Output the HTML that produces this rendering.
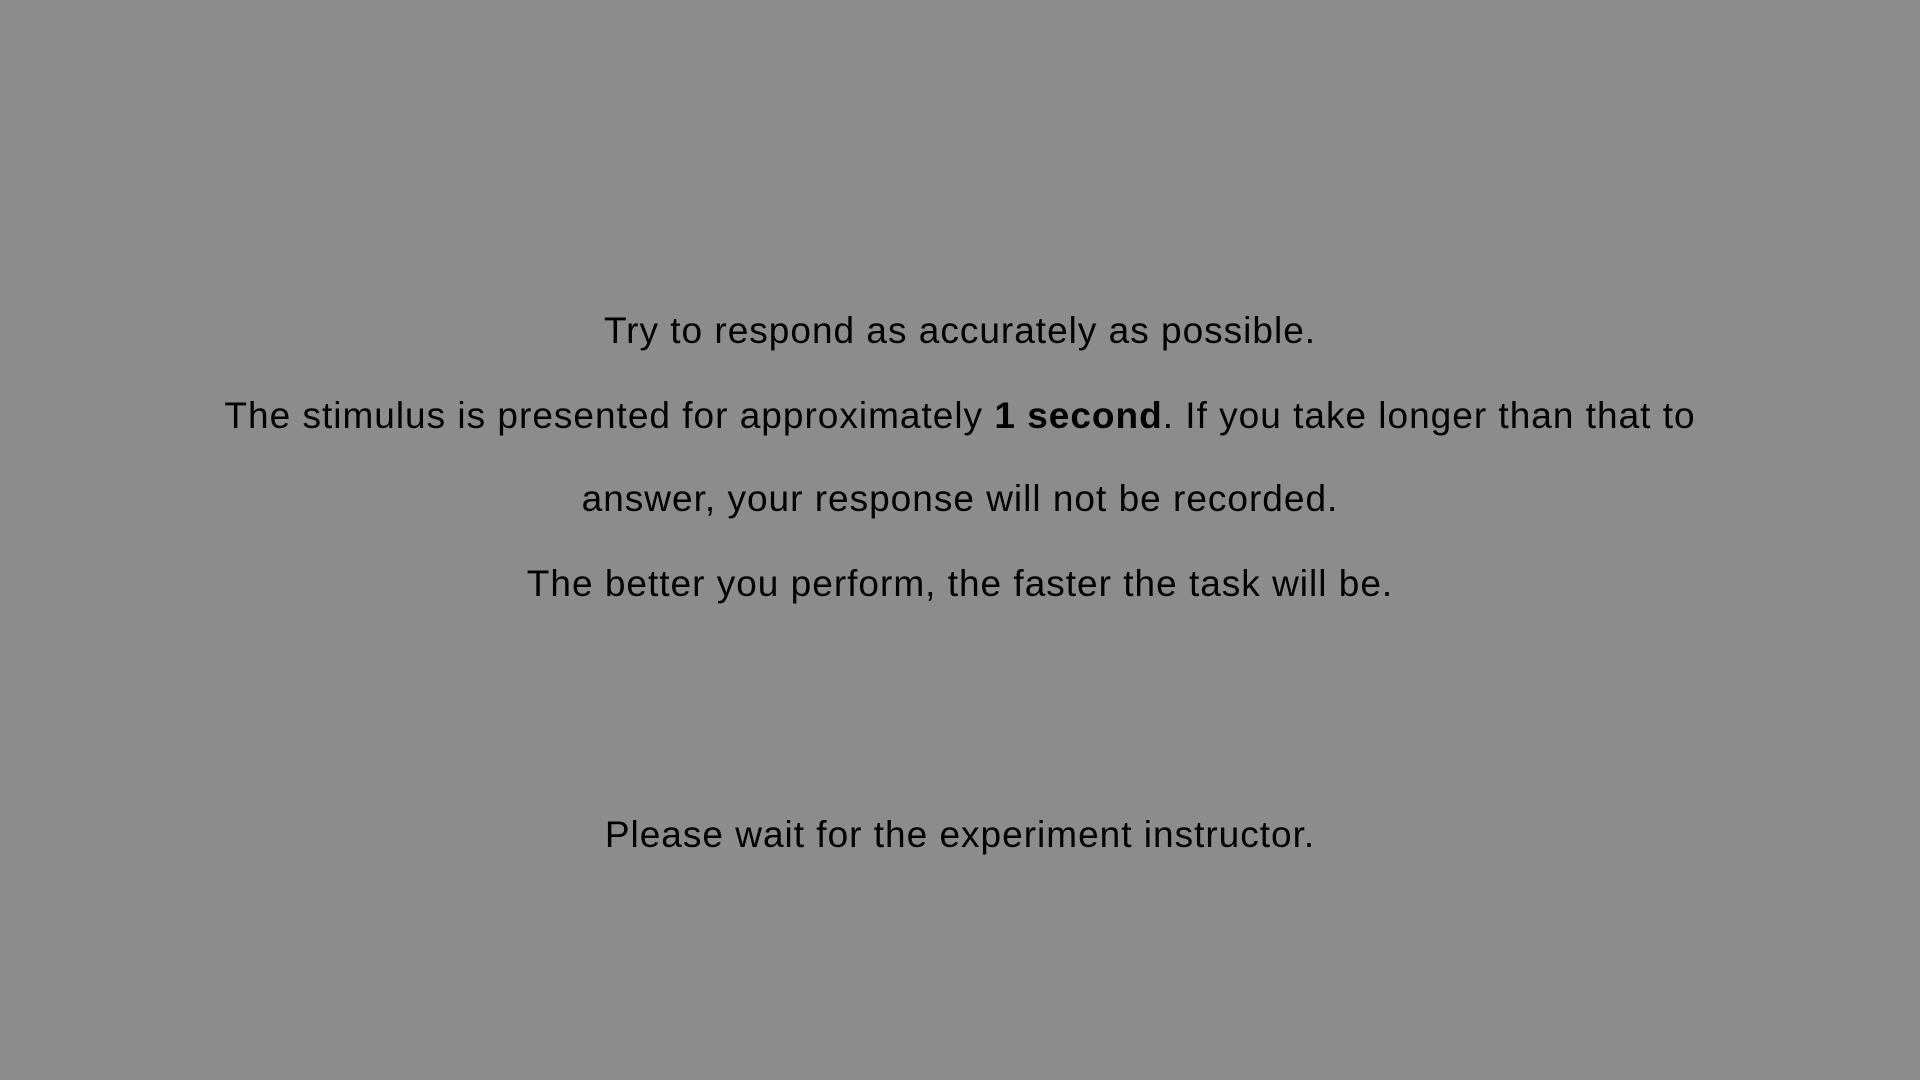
<!DOCTYPE html>
<html><head><meta charset="utf-8"><style>
html,body{margin:0;padding:0;width:1920px;height:1080px;background:#8c8c8c;overflow:hidden}
.l{position:absolute;left:0;width:1920px;text-align:center;font-family:"Liberation Sans",sans-serif;font-size:37px;letter-spacing:1px;line-height:84px;color:#000;white-space:nowrap}
b{font-weight:bold}
</style></head><body>
<div class="l" style="top:289px">Try to respond as accurately as possible.</div>
<div class="l" style="top:374px">The stimulus is presented for approximately <b>1 second</b>. If you take longer than that to</div>
<div class="l" style="top:457px">answer, your response will not be recorded.</div>
<div class="l" style="top:542px">The better you perform, the faster the task will be.</div>
<div class="l" style="top:793px">Please wait for the experiment instructor.</div>
</body></html>
